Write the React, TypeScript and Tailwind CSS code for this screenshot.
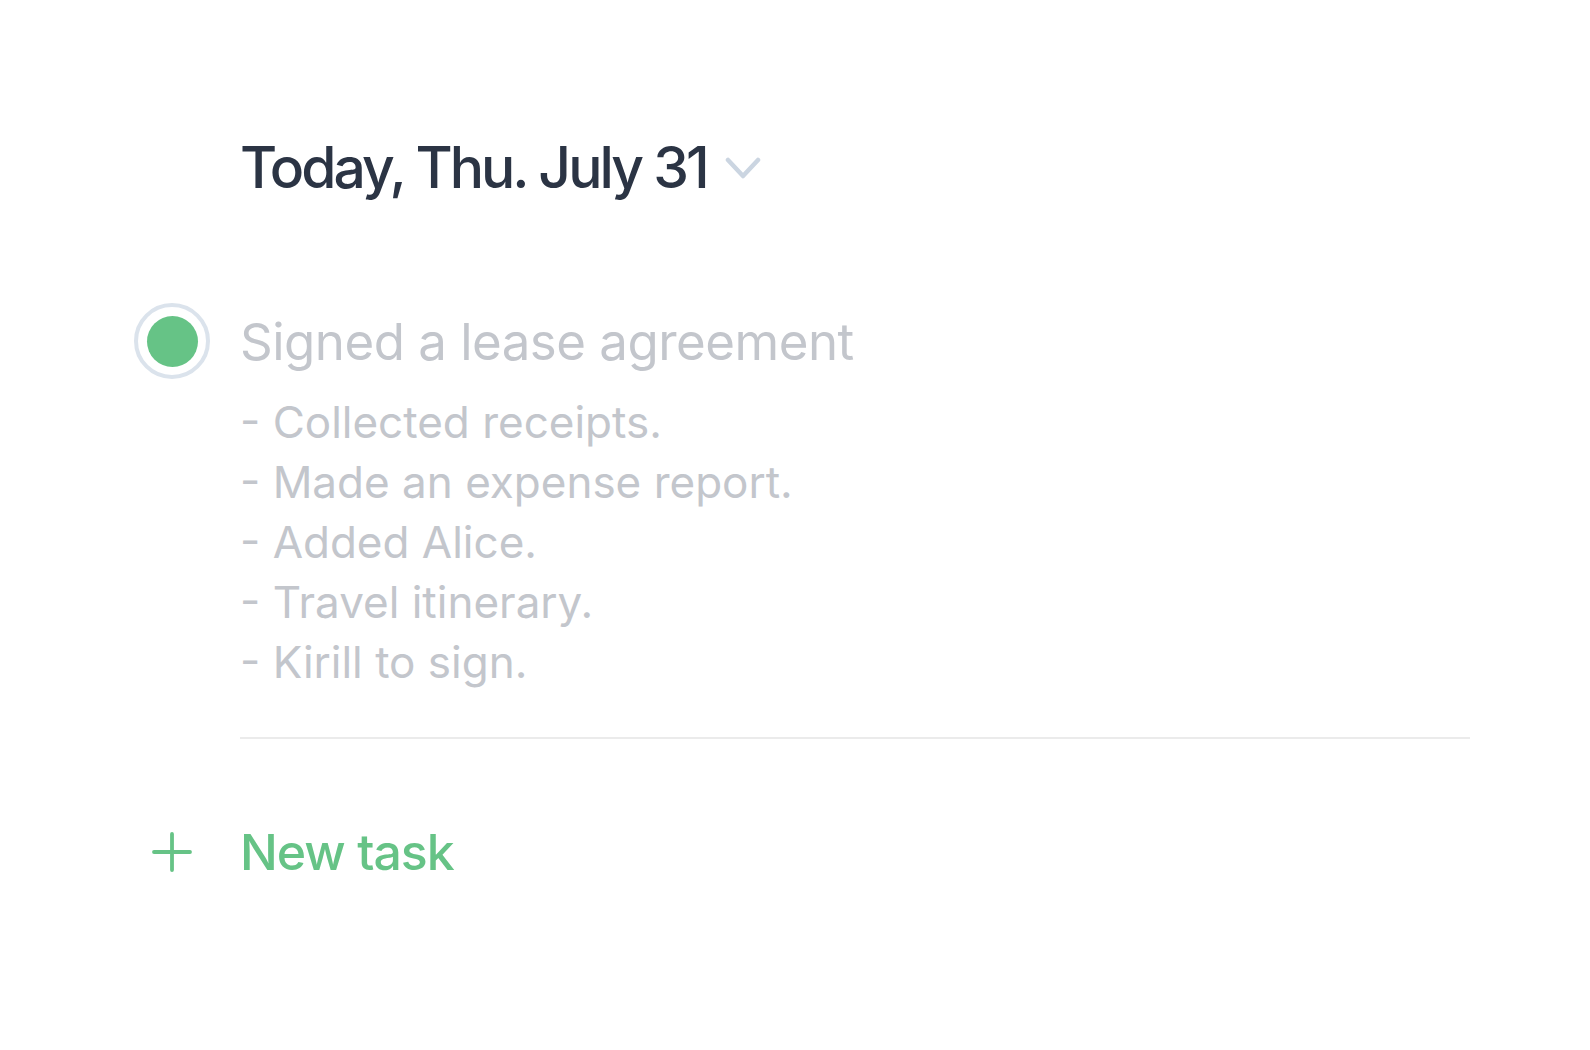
const NOTES = [
  'Collected receipts.',
  'Made an expense report.',
  'Added Alice.',
  'Travel itinerary.',
  'Kirill to sign.',
];

export default function App() {
  return (
    <div className="min-h-screen w-full bg-white font-['Inter',sans-serif]">
      <div className="pl-[134px] pr-[120px] pt-[128px]">
        {/* ── Date header ── */}
        <div className="flex">
          <div className="w-[106px] shrink-0" />
          <div className="flex items-center gap-[18px]">
            <h1 className="text-[57px] leading-[80px] font-medium tracking-[-0.052em] text-[#2b3444]">
              Today, Thu. July 31
            </h1>
            <svg width="36" height="24" viewBox="0 0 36 24" fill="none" className="mt-0 text-[#cbd5e1]">
              <path d="M3 4l15 16L33 4" stroke="currentColor" strokeWidth="4.5" strokeLinecap="round" strokeLinejoin="round" />
            </svg>
          </div>
        </div>

        {/* ── Task ── */}
        <div className="flex mt-[96px]">
          <div className="w-[106px] shrink-0 -mt-[1px]">
            <div className="w-[76px] h-[76px] rounded-full border-[4px] border-[#dbe3ec] flex items-center justify-center">
              <div className="w-[51px] h-[51px] rounded-full bg-[#66c386]" />
            </div>
          </div>
          <div className="flex-1 min-w-0">
            <p className="text-[51px] leading-[76px] tracking-[-0.01em] text-[#c3c6cc]">
              Signed a lease agreement
            </p>
            <div className="mt-[12px] text-[44px] leading-[60px] text-[#c3c6cc]">
              {NOTES.map((n) => (
                <p key={n}>- {n}</p>
              ))}
            </div>
            <div className="mt-[45px] h-[2px] bg-[#ebebeb]" />
          </div>
        </div>

        {/* ── New task ── */}
        <div className="flex items-center mt-[77px]">
          <div className="w-[106px] shrink-0 pl-[17px]">
            <svg width="42" height="42" viewBox="0 0 42 42" fill="none" className="text-[#66c386]">
              <path d="M21 3v36M3 21h36" stroke="currentColor" strokeWidth="3.8" strokeLinecap="round" />
            </svg>
          </div>
          <p className="text-[50px] leading-[72px] font-medium tracking-[-0.02em] text-[#66c386]">New task</p>
        </div>
      </div>
    </div>
  );
}
